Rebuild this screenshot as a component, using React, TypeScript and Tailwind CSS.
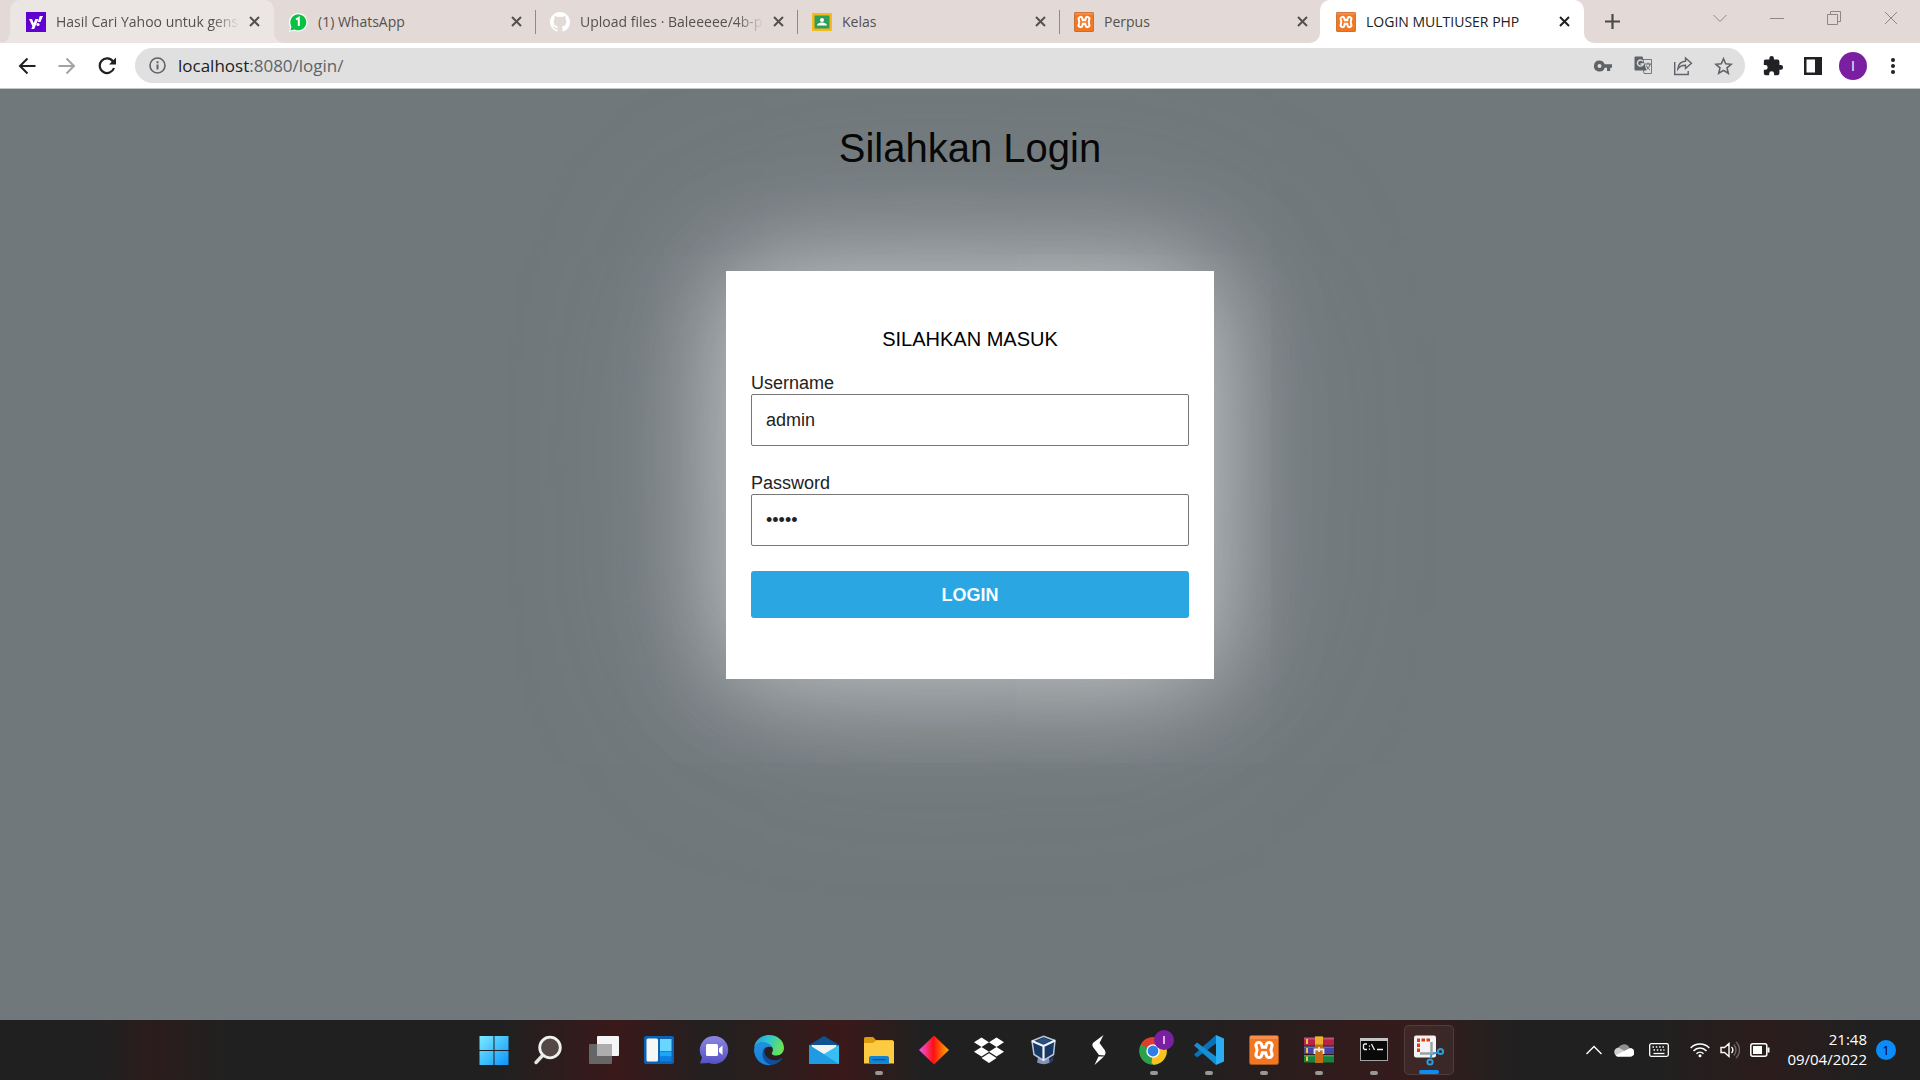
import React from "react";

function Xampp({ size }: { size: number }) {
  const bone = "M9.800 10.300Q11.800 15 9.800 19.700M20.200 10.300Q18.200 15 20.200 19.700M10.800 15h8.400";
  return (
    <svg width={size} height={size} viewBox="0 0 30 30" fill="none" strokeLinecap="round">
      <rect x="0.5" y="0.5" width="29" height="29" rx="2" fill="#f37623" stroke="#a9541b" />
      <rect x="1" y="1" width="28" height="3" fill="#f9a066" opacity=".6" />
      <path d={bone} stroke="#fff" strokeWidth="8.800" />
      <path d={bone} stroke="#f37623" strokeWidth="2.600" />
    </svg>
  );
}

const Yahoo = () => (
  <svg width="20" height="20" viewBox="0 0 20 20">
    <rect width="20" height="20" fill="#6001d2" />
    <path d="M3 7h3l1.700 4L9.400 7h3L8.200 17H5.300l1.100-2.700z" fill="#fff" />
    <path d="M13.800 4H17l-2.500 6h-2.700z" fill="#fff" />
    <circle cx="12" cy="12.500" r="1.600" fill="#fff" />
  </svg>
);
const WhatsApp = () => (
  <svg width="20" height="20" viewBox="0 0 20 20">
    <path d="M1 20l1.200-5A9.300 9.300 0 1 1 6 18.600z" fill="#fff" />
    <path d="M2.400 18.400l1-4A8 8 0 1 1 6.500 17.400z" fill="#0bc144" />
    <path d="M8 7.500L10.800 5.800V14" fill="none" stroke="#fff" strokeWidth="2" />
  </svg>
);
const GitHub = () => (
  <svg width="20" height="20" viewBox="0 0 16 16">
    <path
      fill="#fff"
      d="M8 0C3.580 0 0 3.580 0 8c0 3.540 2.290 6.530 5.470 7.590.4.070.55-.17.55-.38 0-.19-.01-.82-.01-1.490-2.010.37-2.530-.49-2.690-.94-.09-.23-.48-.94-.82-1.130-.28-.15-.68-.52-.01-.53.63-.01 1.080.58 1.230.82.72 1.210 1.870.87 2.330.66.07-.52.28-.87.51-1.070-1.780-.2-3.640-.89-3.640-3.950 0-.87.31-1.590.82-2.150-.08-.2-.36-1.020.08-2.120 0 0 .67-.21 2.200.82.640-.18 1.320-.27 2-.27s1.360.09 2 .27c1.530-1.040 2.200-.82 2.200-.82.440 1.100.16 1.920.08 2.120.51.56.82 1.270.82 2.150 0 3.070-1.870 3.750-3.650 3.950.29.25.54.73.54 1.480 0 1.070-.01 1.930-.01 2.200 0 .21.15.46.55.38A8.010 8.010 0 0 0 16 8c0-4.420-3.580-8-8-8z"
    />
  </svg>
);
const Classroom = () => (
  <svg width="20" height="20" viewBox="0 0 20 20">
    <rect y="1" width="20" height="18" rx="1" fill="#f6b91a" />
    <rect x="2.500" y="3.500" width="15" height="13" fill="#2e9e58" />
    <circle cx="10" cy="8" r="2" fill="#fff" />
    <path d="M5 13.500c0-2 3-3 5-3s5 1 5 3z" fill="#fff" />
  </svg>
);

const tabs = [
  { title: "Hasil Cari Yahoo untuk gens", icon: <Yahoo />, kind: "hover", fade: true },
  { title: "(1) WhatsApp", icon: <WhatsApp />, kind: "line" },
  { title: "Upload files · Baleeeee/4b-p", icon: <GitHub />, kind: "line", fade: true },
  { title: "Kelas", icon: <Classroom />, kind: "line" },
  { title: "Perpus", icon: <Xampp size={20} />, kind: "plain" },
  { title: "LOGIN MULTIUSER PHP", icon: <Xampp size={20} />, kind: "active" },
];

const tabStyle: Record<string, string> = {
  hover: "rounded-t-[10px] bg-[#ebe6e3] text-[#55504e]",
  line: "text-[#55504e]",
  plain: "text-[#55504e]",
  active: "rounded-t-[10px] bg-white text-[#202124]",
};

function Foot({ side, color }: { side: "left" | "right"; color: string }) {
  return (
    <svg
      className={side === "left" ? "absolute bottom-0 -left-[10px]" : "absolute -right-[10px] bottom-0"}
      width="10"
      height="10"
      viewBox="0 0 10 10"
    >
      <path d={side === "left" ? "M10 0v10H0A10 10 0 0 0 10 0z" : "M0 0v10h10A10 10 0 0 1 0 0z"} fill={color} />
    </svg>
  );
}

function TabStrip() {
  return (
    <div className="flex h-[43px] bg-[#e3dad7] pl-[10px]">
      <div className="flex min-w-0">
        {tabs.map((t) => {
          const color = t.kind === "active" ? "#ffffff" : "#ebe6e3";
          const shaped = t.kind === "active" || t.kind === "hover";
          return (
            <div
              key={t.title}
              className={"relative -mr-0.5 flex h-full w-[264px] min-w-0 items-center pr-[10px] pl-4 " + tabStyle[t.kind]}
            >
              {shaped && <Foot side="left" color={color} />}
              {shaped && <Foot side="right" color={color} />}
              <span className="shrink-0">{t.icon}</span>
              <span
                className={
                  "ml-[10px] min-w-0 flex-1 overflow-hidden text-sm leading-5 whitespace-nowrap " +
                  (t.fade ? "[mask-image:linear-gradient(to_right,#000_calc(100%-28px),transparent)]" : "")
                }
              >
                {t.title}
              </span>
              <button aria-label={"Close " + t.title} className="ml-1 flex size-5 shrink-0 items-center justify-center">
                <svg width="11" height="11" viewBox="0 0 11 11" stroke="currentColor" strokeWidth="2">
                  <path d="M1 1l9 9M10 1l-9 9" />
                </svg>
              </button>
              {t.kind === "line" && <span className="absolute top-[10px] right-0 h-6 w-px bg-[#8f8988]" />}
            </div>
          );
        })}
      </div>
      <button aria-label="New tab" className="ml-5 flex w-5 items-center justify-center text-[#4b4a49]">
        <svg width="15" height="15" viewBox="0 0 15 15" stroke="currentColor" strokeWidth="2.200">
          <path d="M7.500 0v15M0 7.500h15" />
        </svg>
      </button>
      <div className="ml-auto flex h-9 pr-px text-[#8d8785]">
        {[
          ["Search tabs", "M.500 4L7 10.500 13.500 4"],
          ["Minimize", "M0 7.500h14"],
          ["Restore", "M.500 3.500h10v10H.500zM3.500 3.500V.500h10v10h-3"],
          ["Close window", "M1 1l12 12M13 1L1 13"],
        ].map(([label, d]) => (
          <button key={label} aria-label={label} className="flex w-[57px] items-center justify-center">
            <svg width="14" height="14" viewBox="0 0 14 14" fill="none" stroke="currentColor">
              <path d={d} />
            </svg>
          </button>
        ))}
      </div>
    </div>
  );
}

function ToolButton({ label, children }: { label: string; children: React.ReactNode }) {
  return (
    <button aria-label={label} className="flex size-10 shrink-0 items-center justify-center">
      {children}
    </button>
  );
}

function Toolbar() {
  return (
    <div className="flex h-[46px] items-center border-b border-[#c4c8c9] bg-white pr-[7px] pl-[7px]">
      <ToolButton label="Back">
        <svg width="18" height="18" viewBox="0 0 18 18" fill="none" stroke="#202124" strokeWidth="2">
          <path d="M17.500 9H2M9.500 1.500L2 9l7.500 7.500" />
        </svg>
      </ToolButton>
      <ToolButton label="Forward">
        <svg width="18" height="18" viewBox="0 0 18 18" fill="none" stroke="#a3a3a3" strokeWidth="2">
          <path d="M.500 9H16M8.500 1.500L16 9l-7.500 7.500" />
        </svg>
      </ToolButton>
      <ToolButton label="Reload">
        <svg width="18" height="18" viewBox="0 0 18 18" fill="none">
          <path d="M15 4.500A7.300 7.300 0 1 0 16 11" stroke="#202124" strokeWidth="2.200" />
          <path d="M18 .5V7.500h-7z" fill="#202124" />
        </svg>
      </ToolButton>
      <div className="ml-2 flex h-[35px] min-w-0 flex-1 items-center rounded-full bg-[#e0e0e0] pr-[2px] pl-[14px]">
        <svg width="17" height="17" viewBox="0 0 17 17" fill="none" stroke="#5f6368">
          <circle cx="8.500" cy="8.500" r="7.500" strokeWidth="1.600" />
          <path d="M8.500 7.500v5M8.500 4.200v2" strokeWidth="2" />
        </svg>
        <div className="relative ml-3 min-w-0 flex-1 text-[17px] leading-6">
          <div aria-hidden="true" className="whitespace-nowrap text-[#5f6368]">
            <span className="text-[#202124]">localhost</span>:8080/login/
          </div>
          <input
            aria-label="Address"
            defaultValue="localhost:8080/login/"
            className="absolute inset-0 w-full bg-transparent text-transparent outline-none"
          />
        </div>
        <ToolButton label="Saved passwords">
          <svg width="18" height="12" viewBox="0 0 18 12" fill="#5f6368">
            <path fillRule="evenodd" d="M5.500.5a5.500 5.500 0 1 0 5.200 7.200H13V11h3.200V7.700H18V4.300h-7.300A5.500 5.500 0 0 0 5.500.5zm0 3.500a2 2 0 1 1 0 4 2 2 0 0 1 0-4z" />
          </svg>
        </ToolButton>
        <ToolButton label="Translate">
          <svg width="19" height="19" viewBox="0 0 19 19" fill="none">
            <path d="M8 3.500h9.500v14H10z" stroke="#76797c" />
            <path d="M1.500.5h7l4 14h-11a1 1 0 0 1-1-1v-12a1 1 0 0 1 1-1z" fill="#5f6368" />
            <path d="M9 5.500A3 3 0 1 0 9.300 8H6.500" stroke="#e0e0e0" strokeWidth="1.400" />
            <path d="M11 8h6M14 6.500V8M16 8c-.5 3-2 4.500-3.500 5.500M12.500 9.500c.5 2 2 3.500 3.500 4.500" stroke="#5f6368" />
          </svg>
        </ToolButton>
        <ToolButton label="Share">
          <svg width="20" height="20" viewBox="0 0 20 20" fill="none" stroke="#5f6368" strokeWidth="1.400">
            <path d="M1.700 6v12.500h13.500V15" />
            <path d="M12.500 2l6 5.200-6 5.300V9.300C9 9.300 6.500 10.500 4.800 13c.4-4.500 3.200-7.500 7.700-7.800z" />
          </svg>
        </ToolButton>
        <ToolButton label="Bookmark this page">
          <svg width="19" height="18" viewBox="0 0 19 18" fill="none" stroke="#5f6368" strokeWidth="1.600">
            <path d="M9.500 1.800l2.200 5 5.500.5-4.200 3.600 1.300 5.400-4.800-2.900-4.800 2.900L6 10.900 1.800 7.300l5.500-.5z" />
          </svg>
        </ToolButton>
      </div>
      <div className="ml-2 flex items-center">
        <ToolButton label="Extensions">
          <svg width="22" height="22" viewBox="0 0 24 24" fill="#202124">
            <path d="M20.500 11H19V7c0-1.100-.9-2-2-2h-4V3.500a2.500 2.500 0 0 0-5 0V5H4c-1.100 0-2 .9-2 2v3.800h1.500a2.700 2.700 0 0 1 0 5.400H2V20c0 1.100.9 2 2 2h3.800v-1.500a2.700 2.700 0 0 1 5.400 0V22H17c1.100 0 2-.9 2-2v-4h1.500a2.500 2.500 0 0 0 0-5z" />
          </svg>
        </ToolButton>
        <ToolButton label="Side panel">
          <svg width="18" height="18" viewBox="0 0 18 18">
            <path fillRule="evenodd" d="M0 0h18v18H0zM2.500 2.500v13H11v-13z" fill="#202124" />
          </svg>
        </ToolButton>
        <ToolButton label="Profile">
          <span className="flex size-7 items-center justify-center rounded-full bg-[#7b1fa2] text-sm text-white">I</span>
        </ToolButton>
        <ToolButton label="Menu">
          <svg width="4" height="16" viewBox="0 0 4 16" fill="#202124">
            <circle cx="2" cy="2" r="2" />
            <circle cx="2" cy="8" r="2" />
            <circle cx="2" cy="14" r="2" />
          </svg>
        </ToolButton>
      </div>
    </div>
  );
}

const labelStyle = "mb-px block text-lg leading-5 text-[#222]";
const fieldStyle =
  "block h-[52px] w-full rounded-[2px] border border-[#767676] bg-white px-[14px] text-lg text-[#222] outline-none";

function LoginPage() {
  return (
    <main className="flex flex-1 flex-col items-center overflow-hidden bg-[#70787b] pl-5 font-['Liberation_Sans',Arial,sans-serif] text-black">
      <h1 className="mt-9 text-[40px] leading-[46px]">Silahkan Login</h1>
      <form
        onSubmit={(e) => e.preventDefault()}
        className="mt-[100px] w-[488px] bg-white px-[25px] pt-14 pb-[61px] shadow-[0_0_100px_#e0e0e4b8,0_0_200px_#dcdce058]"
      >
        <h2 className="text-center text-xl leading-6">SILAHKAN MASUK</h2>
        <div className="mt-[22px]">
          <label htmlFor="username" className={labelStyle}>
            Username
          </label>
          <input id="username" defaultValue="admin" className={fieldStyle} />
        </div>
        <div className="mt-[27px]">
          <label htmlFor="password" className={labelStyle}>
            Password
          </label>
          <input id="password" type="password" defaultValue="admin" className={fieldStyle} />
        </div>
        <button
          type="submit"
          className="mt-[25px] block h-[47px] w-full rounded-[3px] bg-[#2aa7e2] text-lg font-bold text-[#f8fcfe]"
        >
          LOGIN
        </button>
      </form>
    </main>
  );
}

const apps: { label: string; art: React.ReactNode; open?: boolean; active?: boolean }[] = [
  {
    label: "Start",
    art: (
      <>
        <defs>
          <linearGradient id="win" x1="0" y1="0" x2="30" y2="30" gradientUnits="userSpaceOnUse">
            <stop stopColor="#7deeff" />
            <stop offset="1" stopColor="#0a93fa" />
          </linearGradient>
        </defs>
        <path d="M.500 1h14v14H.500zM15.500 1h14v14h-14zM.500 16h14v14H.500zM15.500 16h14v14h-14z" fill="url(#win)" />
      </>
    ),
  },
  {
    label: "Search",
    art: (
      <>
        <path d="M9.500 19.500L2 27.500" stroke="#e4e4e4" strokeWidth="3.400" strokeLinecap="round" />
        <circle cx="16" cy="12.500" r="10.300" fill="#544846" stroke="#f0f0f0" strokeWidth="2.800" />
      </>
    ),
  },
  {
    label: "Task view",
    art: (
      <>
        <rect x="8" y="1" width="22" height="20" rx="1" fill="#f5f5f5" />
        <rect x="0" y="9" width="23" height="20" rx="1" fill="#666" />
        <path d="M8 9h15v12H8z" fill="#adadad" />
      </>
    ),
  },
  {
    label: "Widgets",
    art: (
      <>
        <rect y="1" width="30" height="28" rx="2" fill="#0c63b1" />
        <rect x="2.500" y="3.500" width="11.500" height="23" rx="1.500" fill="#f6f6f6" />
        <path d="M16 4h11.500v12H16z" fill="#69d6ff" />
        <path d="M16 16.500h11.500v5H16z" fill="#1ea4fb" />
        <path d="M16 22h11.500v4.500H16z" fill="#0a7fe8" />
      </>
    ),
  },
  {
    label: "Chat",
    art: (
      <>
        <defs>
          <linearGradient id="chat" x1="0" y1="0" x2="0" y2="1">
            <stop stopColor="#8b86dd" />
            <stop offset="1" stopColor="#5551c6" />
          </linearGradient>
        </defs>
        <path d="M15 1a14 14 0 1 1-5 27L1 28.500l2-6A14 14 0 0 1 15 1z" fill="url(#chat)" />
        <rect x="7" y="9" width="12" height="12" rx="1.500" fill="#fff" />
        <path d="M20 13.500l3.500-3v9.500l-3.500-3z" fill="#fff" />
      </>
    ),
  },
  {
    label: "Edge",
    art: (
      <>
        <defs>
          <linearGradient id="edge1" x1="0" y1="0" x2="1" y2=".3">
            <stop stopColor="#1c9de0" />
            <stop offset=".5" stopColor="#2fc6cf" />
            <stop offset="1" stopColor="#66e35a" />
          </linearGradient>
          <linearGradient id="edge2" x1="0" y1="0" x2="0" y2="1">
            <stop stopColor="#2390dd" />
            <stop offset="1" stopColor="#1681d8" />
          </linearGradient>
        </defs>
        <path d="M0 13C1 5 7.500 0 15 0c9 0 15 6 15 13 0 4.500-3.500 7.500-7.500 7.500-3.500 0-5.500-1.300-4.500-2.800 2-2.700.7-6.700-3-8.200C9 7 2 8.500 0 13z" fill="url(#edge1)" />
        <path d="M0 14.500C1 9 5 6.500 9.500 7c4 .4 7.500 2.600 8.700 5.300C13 10 8 14 9.500 20c1 5 5 9.500 9 9.700C9 32 0 25 0 14.500z" fill="url(#edge2)" />
        <path d="M13 11.500c-4 3-3.500 9 2.500 12.500 4 2.200 8.500 1.500 12-1 .5 0 .8.300.5.800C25 28.500 20 30 17 29.800c-5-1-9-6.300-8.500-11.300.3-3.500 2-6 4.500-7z" fill="#0d4f9e" />
      </>
    ),
  },
  {
    label: "Mail",
    art: (
      <>
        <path d="M0 10L15 1l15 9v8H0z" fill="#0f5195" />
        <path d="M2.500 10h25v8L15 20 2.500 18z" fill="#f2f2f2" />
        <path d="M0 10l15 9 15-9v19H0z" fill="#35c0f1" />
        <path d="M0 10l30 19H0z" fill="#1f9be3" />
      </>
    ),
  },
  {
    label: "File Explorer",
    open: true,
    art: (
      <>
        <path d="M0 3.500a1.500 1.500 0 0 1 1.500-1.500H9l3 3h16.500L30 8H0z" fill="#dd9a0c" />
        <path d="M0 8h9l3-2.500h16.500A1.500 1.500 0 0 1 30 7v21.500H0z" fill="#fdcb41" />
        <path d="M5 28.500V23a2 2 0 0 1 2-2h16a2 2 0 0 1 2 2v5.500z" fill="#1483d2" />
        <path d="M8.500 24.700h13" stroke="#075294" strokeWidth="1.200" />
      </>
    ),
  },
  {
    label: "Diamond",
    art: (
      <>
        <defs>
          <linearGradient id="dia">
            <stop stopColor="#f255f2" />
            <stop offset=".48" stopColor="#ff1010" />
            <stop offset="1" stopColor="#ffb000" />
          </linearGradient>
        </defs>
        <path d="M15 .5L30 15 15 29.500 0 15z" fill="url(#dia)" />
      </>
    ),
  },
  {
    label: "Dropbox",
    art: (
      <path
        d="M7.500 2.500L15 7.200 7.500 12 0 7.200zM22.500 2.500L30 7.200 22.500 12 15 7.200zM7.500 12L15 16.800 7.500 21.500 0 16.800zM22.500 12L30 16.800l-7.500 4.700L15 16.800zM15 18.300l7.500 4.700-7.500 5L7.500 23z"
        fill="#fff"
      />
    ),
  },
  {
    label: "VirtualBox",
    art: (
      <>
        <path d="M9 23h11l1 4.500Q15 31 8 27.500z" fill="#8492b5" />
        <path d="M21 24l4-3 1-9-2 14-4 3z" fill="#27406f" />
        <path d="M14.500 1.200L26 5.500 24.500 19.500l-10 6L5 19.500 3 6z" fill="#173963" stroke="#b9c6da" strokeWidth="1.500" />
        <path d="M3 6l11.500 5L26 5.500M14.500 11v14.500" fill="none" stroke="#eef3fa" strokeWidth="2.200" />
        <path d="M8 6l6.500-3L21.500 5.700l-7 3.200z" fill="#2b527f" />
      </>
    ),
  },
  {
    label: "Strap",
    art: (
      <path
        d="M19.500 0L9.500 7.500Q7.500 9.500 9 12l6 8 5.500 0.500Q22.500 18 21 15.500L15.500 8zM14.500 21.500l5.500 0L10.500 30z"
        fill="#fff"
      />
    ),
  },
  {
    label: "Chrome",
    open: true,
    art: (
      <>
        <circle cx="14" cy="16" r="13.800" fill="#2da04c" />
        <path d="M14 16L2 9.200A13.800 13.800 0 0 1 26 9.200z" fill="#e33b2e" />
        <path d="M14 16l12-6.800A13.800 13.800 0 0 1 14.500 29.800l-2-2z" fill="#fcc31e" />
        <circle cx="14" cy="16" r="6.700" fill="#fff" />
        <circle cx="14" cy="16" r="5.400" fill="#2f7de9" />
        <circle cx="25" cy="5" r="10" fill="#7b1fa2" />
        <path d="M25 1v8" stroke="#d4b4e0" strokeWidth="2" />
      </>
    ),
  },
  {
    label: "Visual Studio Code",
    open: true,
    art: (
      <>
        <path d="M0 19.500L22 0v8.500L3 22.500z" fill="#0b72b8" />
        <path d="M0 10.500l3-3L22 21.500V30z" fill="#148fd6" />
        <path d="M22 0l8 3.500v23L22 30z" fill="#2bacf3" />
      </>
    ),
  },
  { label: "XAMPP", open: true, art: <Xampp size={30} /> },
  {
    label: "WinRAR",
    open: true,
    art: (
      <>
        <path d="M0 2.500h30v8H0z" fill="#b82448" />
        <path d="M0 11.500h30v7.500H0z" fill="#4545a8" />
        <path d="M0 20h30v7.500H0z" fill="#16833a" />
        <path d="M0 2.500h30v2H0zM0 11.500h30v1.500H0zM0 20h30v1.500H0z" fill="#fff" opacity=".2" />
        <path d="M3 4v5M3 13v5M3 21.500v4.500" stroke="#f0c441" strokeWidth="2" />
        <path d="M11 1.500h8v26.500h-8z" fill="#c46b13" />
        <path d="M11 1.500h8v8h-8z" fill="#e9b52c" />
        <path d="M10.500 19v-4.500h9V19M15 12v5" fill="none" stroke="#e9e9e9" strokeWidth="1.800" />
      </>
    ),
  },
  {
    label: "Command Prompt",
    open: true,
    art: (
      <>
        <rect x="1.500" y="3.500" width="27" height="22" fill="#090909" stroke="#a5a5a5" />
        <path d="M1 3h28v3H1z" fill="#c5c5c5" />
        <path d="M8 9h-2.500l-1 1v3.500l1 1H8M10.500 10.500v1.200M10.500 13.500v1.200M12.500 9l3 6M18 14.500h6" fill="none" stroke="#f0f0f0" strokeWidth="1.300" />
      </>
    ),
  },
  {
    label: "Snipping Tool",
    open: true,
    active: true,
    art: (
      <>
        <rect y=".5" width="22" height="22" rx="2" fill="#f4f4f4" />
        <path d="M4.500 17V5H17" fill="none" stroke="#dd3a12" strokeWidth="3" strokeDasharray="3.500 1.500" />
        <path d="M17.500 7v13M6 18.500h14" stroke="#9aa0a5" strokeWidth="2.400" />
        <path d="M17.500 19l-.8 4M19 18.500l4-.8" stroke="#2a9ddb" strokeWidth="2" />
        <circle cx="16" cy="27" r="2.600" fill="none" stroke="#2a9ddb" strokeWidth="2" />
        <circle cx="26.500" cy="16.500" r="2.600" fill="none" stroke="#2a9ddb" strokeWidth="2" />
      </>
    ),
  },
];

function Taskbar() {
  return (
    <footer className="flex h-[60px] shrink-0 items-center bg-[linear-gradient(90deg,#202020_0%,#202020_5%,#2b1c1c_8%,#202020_12%,#202020_26%,#3a191a_32%,#222020_37%,#3a1919_44%,#202020_48%,#202020_62%,#311b1b_70%,#351c1c_74%,#202020_79%,#202020_86%,#2c1c1c_92%,#202020_97%)] text-white">
      <div className="flex-1" />
      <nav aria-label="Taskbar" className="flex gap-[5px] pl-[26px]">
        {apps.map((a) => (
          <button
            key={a.label}
            aria-label={a.label}
            className={
              "relative flex h-[50px] w-[50px] items-center justify-center rounded-[5px] " +
              (a.active ? "border border-white/10 bg-white/5" : "")
            }
          >
            <svg width="30" height="30" viewBox="0 0 30 30" className="overflow-visible">
              {a.art}
            </svg>
            {a.open && (
              <span
                className={
                  "absolute bottom-0 rounded-full " + (a.active ? "h-1 w-5 bg-[#0a8dfa]" : "h-1 w-2 bg-[#9a9797]")
                }
              />
            )}
          </button>
        ))}
      </nav>
      <div className="flex flex-1 items-center justify-end pr-6">
        <button aria-label="Hidden icons" className="flex w-8 justify-center">
          <svg width="16" height="10" viewBox="0 0 16 10" fill="none" stroke="#fff" strokeWidth="1.400">
            <path d="M.5 9L8 1.500 15.500 9" />
          </svg>
        </button>
        <button aria-label="OneDrive" className="flex w-7 justify-center">
          <svg width="20" height="14" viewBox="0 0 20 14">
            <path d="M4 7a6 6 0 0 1 11.500-2L12 9z" fill="#8f8f8f" />
            <path d="M4.500 4.500l8 4.500L5 13.500a4.500 4.500 0 0 1-.5-9z" fill="#cfcfcf" />
            <path d="M16 5a4.300 4.300 0 0 1 0 8.800H4.500a4.500 4.500 0 0 1-3-1.300z" fill="#fff" />
          </svg>
        </button>
        <button aria-label="Touch keyboard" className="mr-[10px] flex w-[42px] justify-center">
          <svg width="20" height="14" viewBox="0 0 20 14" fill="none" stroke="#fff">
            <rect x=".7" y=".7" width="18.600" height="12.600" rx="1.500" strokeWidth="1.300" />
            <path d="M3.500 4h13M4.500 7h11" strokeWidth="1.500" strokeDasharray="1.500 1.800" />
            <path d="M4.500 10.500h11" strokeWidth="1.300" />
          </svg>
        </button>
        <button aria-label="Network, volume and battery" className="flex items-center gap-[10px]">
          <svg width="20" height="16" viewBox="0 0 20 16" fill="none" stroke="#fff" strokeWidth="1.500">
            <path d="M.7 6a13 13 0 0 1 18.600 0M3.500 8.900a9 9 0 0 1 13 0M6.500 11.700a5 5 0 0 1 7 0" />
            <circle cx="10" cy="13.800" r="1.500" fill="#fff" stroke="none" />
          </svg>
          <svg width="20" height="18" viewBox="0 0 20 18" fill="none" stroke="#fff" strokeWidth="1.400">
            <path d="M1 6.500h3.500L9 2.500v13l-4.500-4H1zM11.500 6a4 4 0 0 1 0 6" />
            <path d="M13.800 3.500a8 8 0 0 1 0 11M16 1a11 11 0 0 1 0 16" stroke="#716867" />
          </svg>
          <svg width="20" height="14" viewBox="0 0 20 14" fill="none" stroke="#fff" strokeWidth="1.500">
            <rect x=".8" y=".8" width="16" height="12.400" rx="2" />
            <path d="M3 3h9v8H3z" fill="#fff" stroke="none" />
            <path d="M18.500 4.500v5" strokeWidth="2" />
          </svg>
        </button>
        <time className="ml-[17px] pb-0.5 text-right text-[15px] leading-5">
          21:48
          <br />
          09/04/2022
        </time>
        <button
          aria-label="1 notification"
          className="ml-[9px] flex size-5 items-center justify-center rounded-full bg-[#0a8dfa] text-[13px] leading-5 text-black"
        >
          1
        </button>
      </div>
    </footer>
  );
}

export default function App() {
  return (
    <div className="flex min-h-screen flex-col font-['Open_Sans','Noto_Sans',sans-serif]">
      <header className="shrink-0">
        <TabStrip />
        <Toolbar />
      </header>
      <LoginPage />
      <Taskbar />
    </div>
  );
}
